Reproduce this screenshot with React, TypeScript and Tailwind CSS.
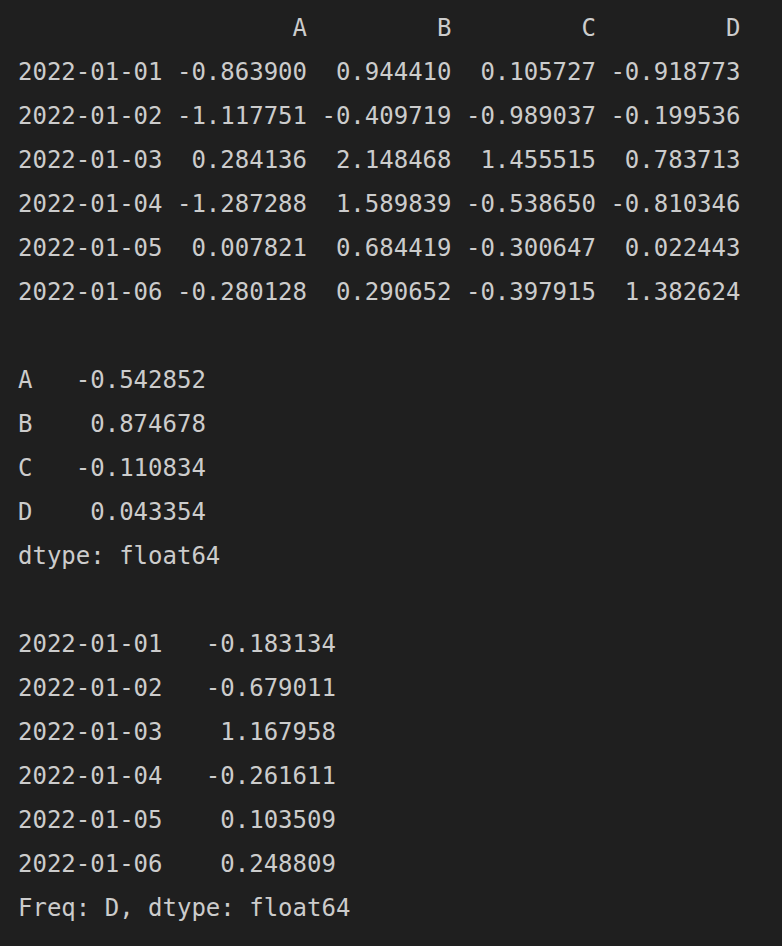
export default function App() {
  const text = `                   A         B         C         D
2022-01-01 -0.863900  0.944410  0.105727 -0.918773
2022-01-02 -1.117751 -0.409719 -0.989037 -0.199536
2022-01-03  0.284136  2.148468  1.455515  0.783713
2022-01-04 -1.287288  1.589839 -0.538650 -0.810346
2022-01-05  0.007821  0.684419 -0.300647  0.022443
2022-01-06 -0.280128  0.290652 -0.397915  1.382624

A   -0.542852
B    0.874678
C   -0.110834
D    0.043354
dtype: float64

2022-01-01   -0.183134
2022-01-02   -0.679011
2022-01-03    1.167958
2022-01-04   -0.261611
2022-01-05    0.103509
2022-01-06    0.248809
Freq: D, dtype: float64`;
  return (
    <div className="min-h-[946px] w-full bg-[#1f1f1f] pt-[6px] pl-[18px]">
      <pre
        className="m-0 whitespace-pre text-[24px] leading-[44px] text-[#cccccc]"
        style={{ fontFamily: '"DejaVu Sans Mono", monospace' }}
      >
        {text}
      </pre>
    </div>
  );
}
